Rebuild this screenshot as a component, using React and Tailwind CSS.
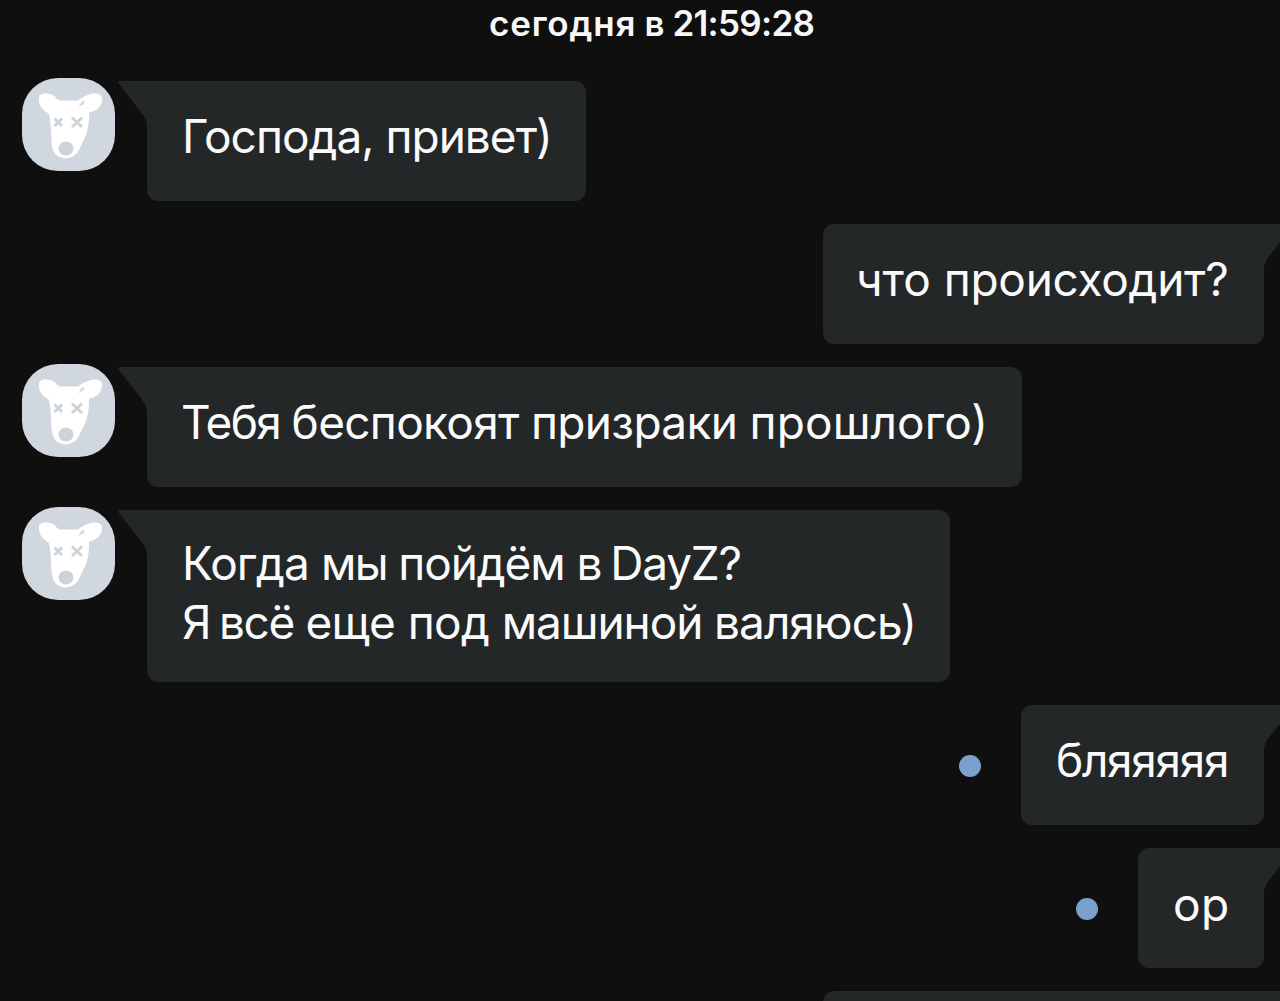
const MESSAGES = [
  {
    side: 'left',
    box: 'w-[439px] h-[120px] pt-[26px] pl-[35px]',
    lines: [[['Господа,', 'tracking-[-1px]'], ['привет)', 'tracking-[-1px]']]],
  },
  {
    side: 'right',
    box: 'w-[441px] h-[120px] pt-[26px] pl-[33px]',
    lines: [[['что', 'tracking-[0px]'], ['происходит?', 'tracking-[-0.3px]']]],
  },
  {
    side: 'left',
    box: 'w-[875px] h-[120px] pt-[26px] pl-[34px]',
    lines: [
      [
        ['Тебя', 'tracking-[-1.6px]'],
        ['беспокоят', 'tracking-[-0.7px]'],
        ['призраки', 'tracking-[-0.67px]'],
        ['прошлого)', 'tracking-[0.1px]'],
      ],
    ],
  },
  {
    side: 'left',
    box: 'w-[803px] h-[172px] pt-[24px] pl-[35px]',
    lines: [
      [
        ['Когда', 'tracking-[-0.9px]'],
        ['мы', 'tracking-[-1.67px]'],
        ['пойдём', 'tracking-[-1.1px]'],
        ['в', 'tracking-[-2.5px]'],
        ['DayZ?', 'tracking-[-1.25px]'],
      ],
      [
        ['Я', 'tracking-[-2.8px]'],
        ['всё', 'tracking-[-1.4px]'],
        ['еще', 'tracking-[-0.6px]'],
        ['под', 'tracking-[-0.6px]'],
        ['машиной', 'tracking-[-1.1px]'],
        ['валяюсь)', 'tracking-[-1px]'],
      ],
    ],
  },
  {
    side: 'right',
    unread: true,
    box: 'w-[243px] h-[120px] pt-[26px] pl-[35px]',
    lines: [[['бляяяяя', 'tracking-[-1.3px]']]],
  },
  {
    side: 'right',
    unread: true,
    box: 'w-[126px] h-[120px] pt-[27px] pl-[35px]',
    lines: [[['ор', 'tracking-[0.3px]']]],
  },
  { side: 'right', box: 'w-[441px] h-[120px]', lines: [] },
];

const Avatar = () => (
  <svg viewBox="0 0 93 93" className="-mt-[3px] mr-8 h-[93px] w-[93px] shrink-0">
    <rect width="93" height="93" rx="36" fill="#d0d7df" />
    <path
      d="M17 20C17.5 14.5 25 15 31 17C34 18.5 35 22 38 22.5H56C59 20 62 18 66 17C73 14.500 80 15 80 21C80 27 76 33 67 34.500C67.500 42 66 50 65 54C63 61 60 64 58 70C55 77 49 80.500 43 80.500C36 79.500 31 76 30 68C29 60 29.500 48 27 36C22 33 16 28 17 20Z"
      fill="#fff"
    />
    <ellipse cx="44" cy="70.500" rx="7.500" ry="7" fill="#cdd3da" />
    <path d="M32.500 40.500l7.500 7.500M40 40.500l-7.500 7.500M50 39.500l10 9.500M60 39.500l-10 9.500" stroke="#cdd3da" strokeWidth="3" />
    <path d="M57 30l1-4 4-4-0.500 5-2-0.500z" fill="#cdd3da" />
  </svg>
);

const Tail = ({ side }) => (
  <svg
    viewBox="0 0 30 46"
    className={`absolute top-0 h-[46px] w-[30px] ${side === 'left' ? '-left-[29px]' : '-right-[29px] -scale-x-100'}`}
  >
    <path d="M2 0H30V46H29C29 40 27 36 22 30L1 3Q-1 0 2 0Z" fill="#242727" />
  </svg>
);

const Line = ({ words }) => (
  <p className="whitespace-nowrap text-[46px] leading-[59px] text-[#fafafa]">
    {words.map(([word, tracking], index) => (
      <span key={index} className={tracking}>
        {index < words.length - 1 ? `${word} ` : word}
      </span>
    ))}
  </p>
);

const Message = ({ side, box, unread, lines }) => (
  <div className={`flex shrink-0 ${side === 'left' ? 'pl-[22px]' : 'justify-end pr-4'}`}>
    {side === 'left' && <Avatar />}
    {unread && <span className="mr-10 mt-[50px] h-[22px] w-[22px] shrink-0 rounded-full bg-[#7ba0cb]" />}
    <div
      className={`relative shrink-0 bg-[#242727] ${box} ${
        side === 'left' ? 'rounded-r-[11px] rounded-bl-[11px]' : 'rounded-l-[11px] rounded-br-[11px]'
      }`}
    >
      <Tail side={side} />
      {lines.map((words, index) => (
        <Line key={index} words={words} />
      ))}
    </div>
  </div>
);

const App = () => (
  <main className="flex h-[1001px] w-[1280px] flex-col overflow-hidden bg-[#0e0f0e] font-['Inter',sans-serif]">
    <p className="h-[81px] shrink-0 whitespace-nowrap pl-[489px] text-[35px] font-semibold leading-[46px] text-[#f7f7f7]">
      <span className="tracking-[0.8px]">сегодня</span>
      <span className="tracking-[-0.5px]"> в </span>
      <span className="tracking-[-0.7px]">21:59:28</span>
    </p>
    <div className="flex flex-col gap-[23px]">
      {MESSAGES.map((message, index) => (
        <Message key={index} {...message} />
      ))}
    </div>
  </main>
);

export default App;
